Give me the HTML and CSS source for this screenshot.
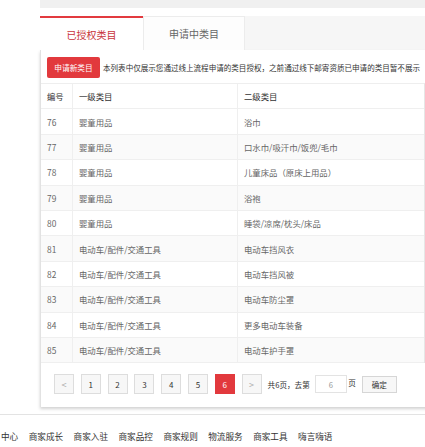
FILE: index.html
```html
<!DOCTYPE html>
<html lang="zh-CN">
<head>
<meta charset="utf-8">
<title>已授权类目</title>
<link rel="stylesheet" href="styles.css">
</head>
<body>
<div class="main">
  <div class="topbar"></div>
  <div class="tabs">
    <div class="tab active">已授权类目</div>
    <div class="tab">申请中类目</div>
    <div class="tab-rest"></div>
  </div>
  <div class="panel">
    <div class="toolbar">
      <button class="btn-apply">申请新类目</button>
      <span class="notice">本列表中仅展示您通过线上流程申请的类目授权，之前通过线下邮寄资质已申请的类目暂不展示</span>
    </div>
    <div class="table">
      <div class="row head"><div class="cell">编号</div><div class="cell">一级类目</div><div class="cell">二级类目</div></div>
      <div class="row"><div class="cell">76</div><div class="cell">婴童用品</div><div class="cell">浴巾</div></div>
      <div class="row alt"><div class="cell">77</div><div class="cell">婴童用品</div><div class="cell">口水巾/吸汗巾/饭兜/毛巾</div></div>
      <div class="row"><div class="cell">78</div><div class="cell">婴童用品</div><div class="cell">儿童床品（原床上用品）</div></div>
      <div class="row alt"><div class="cell">79</div><div class="cell">婴童用品</div><div class="cell">浴袍</div></div>
      <div class="row"><div class="cell">80</div><div class="cell">婴童用品</div><div class="cell">睡袋/凉席/枕头/床品</div></div>
      <div class="row alt"><div class="cell">81</div><div class="cell">电动车/配件/交通工具</div><div class="cell">电动车挡风衣</div></div>
      <div class="row"><div class="cell">82</div><div class="cell">电动车/配件/交通工具</div><div class="cell">电动车挡风被</div></div>
      <div class="row alt"><div class="cell">83</div><div class="cell">电动车/配件/交通工具</div><div class="cell">电动车防尘罩</div></div>
      <div class="row"><div class="cell">84</div><div class="cell">电动车/配件/交通工具</div><div class="cell">更多电动车装备</div></div>
      <div class="row alt"><div class="cell">85</div><div class="cell">电动车/配件/交通工具</div><div class="cell">电动车护手罩</div></div>
    </div>
    <div class="pager">
      <span class="pg arrow">&lt;</span>
      <span class="pg">1</span>
      <span class="pg">2</span>
      <span class="pg">3</span>
      <span class="pg">4</span>
      <span class="pg">5</span>
      <span class="pg current">6</span>
      <span class="pg arrow">&gt;</span>
      <span class="pg-text">共6页，去第</span>
      <span class="pg-input">6</span>
      <span class="pg-unit">页</span>
      <span class="pg-ok">确定</span>
    </div>
  </div>
</div>
<div class="footer">
  <span class="link">中心</span>
  <span class="link">商家成长</span>
  <span class="link">商家入驻</span>
  <span class="link">商家品控</span>
  <span class="link">商家规则</span>
  <span class="link">物流服务</span>
  <span class="link">商家工具</span>
  <span class="link">嗨言嗨语</span>
</div>
</body>
</html>
```

FILE: styles.css
```css
html, body {
  margin: 0;
  padding: 0;
  overflow: hidden;
  background: #fff;
  font-family: "Noto Sans CJK SC", "Microsoft YaHei", sans-serif;
  color: #333;
}

.main {
  margin-left: 40px;
  width: 400px;
}

.topbar {
  height: 8px;
  background: #f0f0f0;
}

.tabs {
  margin-top: 8px;
  height: 34px;
  display: flex;
  background: #f6f6f6;
}

.tab {
  box-sizing: border-box;
  width: 102px;
  height: 34px;
  display: flex;
  align-items: center;
  justify-content: center;
  font-size: 10px;
  line-height: 12px;
  color: #666;
  background: #fdfdfd;
  border: 1px solid #ececec;
  border-bottom: none;
}

.tab.active {
  width: 103px;
  color: #c8333a;
  background: #fff;
  border: none;
  border-top: 2px solid #e23a3f;
  padding-top: 1px;
}

.tab-rest {
  flex: 1;
}

.panel {
  box-sizing: border-box;
  width: 392px;
  border-left: 1px solid #e2e2e2;
  background: #fff;
  box-shadow: 0 2px 3px rgba(0, 0, 0, 0.18);
  padding-bottom: 13px;
}

.toolbar {
  display: flex;
  align-items: center;
  padding: 7px 0 0 6px;
  height: 21px;
  margin-bottom: 5px;
  white-space: nowrap;
}

.btn-apply {
  width: 53px;
  height: 21px;
  padding: 0;
  border: none;
  border-radius: 2px;
  background: #e2393d;
  color: #fff;
  font-family: inherit;
  font-size: 7.7px;
  line-height: 21px;
}

.notice {
  margin-left: 3px;
  font-size: 7.55px;
  line-height: 10px;
  color: #333;
  letter-spacing: 0;
}

.table {
  width: 383px;
  border-top: 1px solid #eee;
  border-right: 1px solid #e6e6e6;
}

.row {
  box-sizing: border-box;
  display: grid;
  grid-template-columns: 32px 165px 186px;
  height: 25.4px;
  border-bottom: 1px solid #efefef;
  font-size: 8.4px;
  line-height: 10px;
  color: #666;
}

.row.alt {
  background: #fafafa;
}

.row.head {
  color: #333;
  background: #fff;
}

.cell {
  display: flex;
  align-items: center;
  padding-left: 6px;
  border-right: 1px solid #efefef;
  white-space: nowrap;
}

.cell:last-child {
  border-right: none;
}

.pager {
  display: flex;
  align-items: center;
  padding: 11px 0 0 13px;
  height: 20px;
  white-space: nowrap;
}

.pg {
  box-sizing: border-box;
  width: 20px;
  height: 20px;
  margin-right: 6.8px;
  border: 1px solid #ddd;
  background: #f7f7f7;
  display: flex;
  align-items: center;
  justify-content: center;
  font-size: 8px;
  color: #333;
}

.pg.arrow {
  color: #aaa;
  font-size: 9px;
}

.pg.current {
  background: #e2393d;
  border-color: #e2393d;
  color: #fff;
}

.pg.arrow:last-of-type {
  margin-right: 0;
}

.pg-text {
  margin-left: -0.8px;
  font-size: 7.6px;
  color: #333;
}

.pg-input {
  box-sizing: border-box;
  width: 32px;
  height: 18px;
  margin-left: 5px;
  border: 1px solid #e3e3e3;
  background: #fff;
  display: flex;
  align-items: center;
  justify-content: center;
  font-size: 7.6px;
  color: #999;
}

.pg-unit {
  margin-left: 1.5px;
  font-size: 7.6px;
  color: #333;
  margin-bottom: 3px;
}

.pg-ok {
  box-sizing: border-box;
  width: 35px;
  height: 17px;
  margin-left: 6px;
  border: 1px solid #d6d6d6;
  background: #f7f7f7;
  display: flex;
  align-items: center;
  justify-content: center;
  font-size: 7.6px;
  color: #333;
}

.footer {
  margin-top: 7px;
  border-top: 1px solid #e3e3e3;
  padding: 15px 0 0 1px;
  display: flex;
  gap: 10.5px;
  font-size: 8.6px;
  line-height: 12px;
  color: #333;
  white-space: nowrap;
}
```
